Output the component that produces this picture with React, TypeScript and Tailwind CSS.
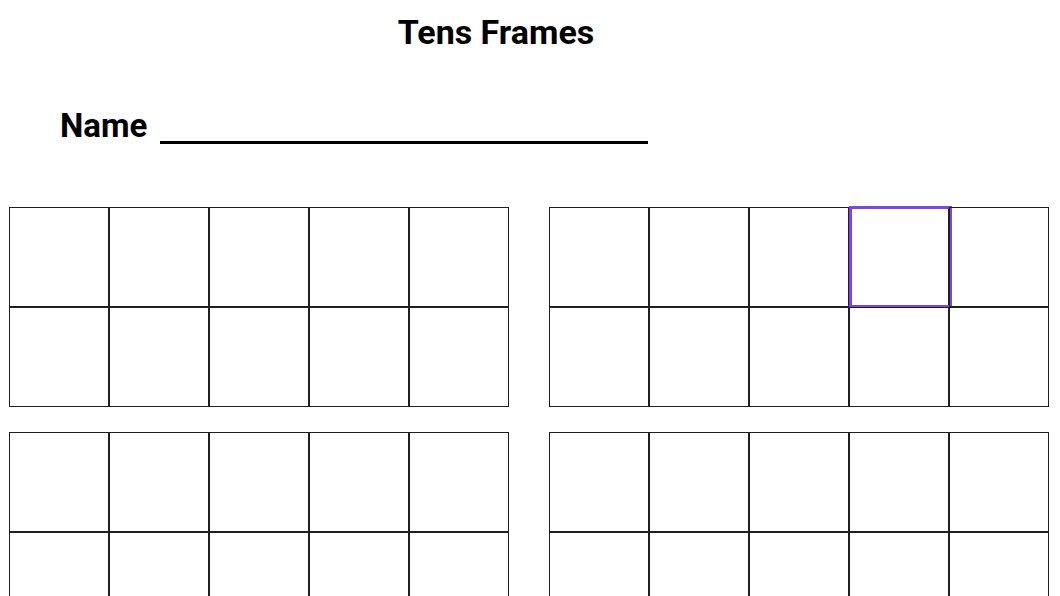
import React from 'react';

function TensFrame({ highlight }: { highlight?: number }) {
  const cells = Array.from({ length: 10 }, (_, i) => i);
  return (
    <div className="grid grid-cols-[repeat(5,100px)] grid-rows-[repeat(2,100px)]">
      {cells.map((i) => (
        <div key={i} className="relative box-border h-[100px] w-[100px] border border-[#1f1f1f]">
          {highlight === i && (
            <div className="absolute left-[-1px] top-[-2px] h-[102px] w-[103px] border-[3px] border-[#7c45e6]" />
          )}
        </div>
      ))}
    </div>
  );
}

export default function App() {
  return (
    <main className="h-[596px] w-[1060px] overflow-hidden bg-white text-black font-['Roboto','Liberation_Sans',sans-serif]">
      <h1 className="pt-[15px] pr-[68px] text-center text-[34px] font-bold leading-none">Tens Frames</h1>

      <div className="mt-[60px] flex items-start pl-[60px]">
        <span className="text-[33px] font-bold leading-none">Name</span>
        <div className="ml-[13px] h-[35px] w-[488px] border-b-[3px] border-black" />
      </div>

      <section className="mt-[63px] grid grid-cols-[500px_500px] gap-x-[40px] gap-y-[25px] pl-[9px]">
        <TensFrame />
        <TensFrame highlight={3} />
        <TensFrame />
        <TensFrame />
      </section>
    </main>
  );
}
